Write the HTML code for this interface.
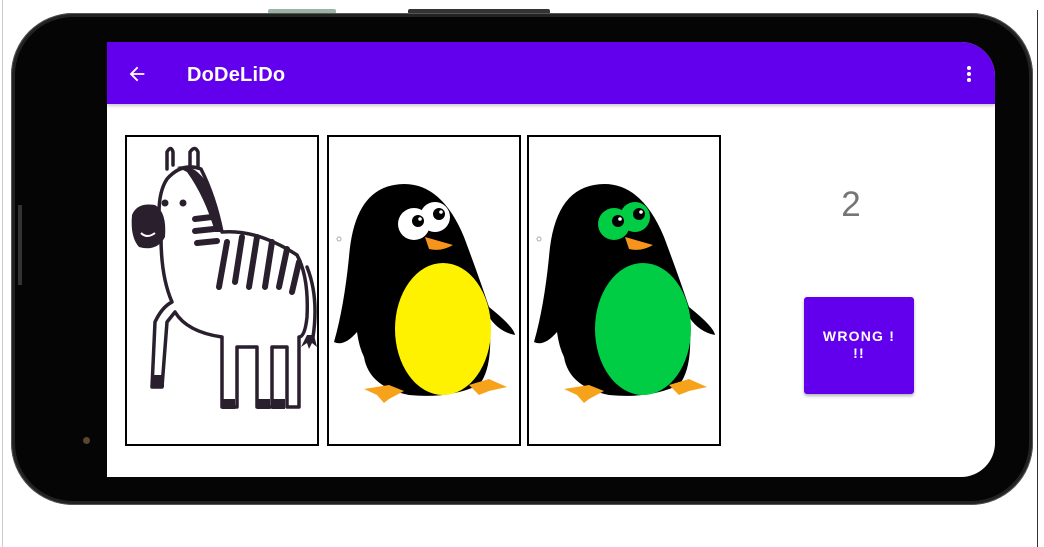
<!DOCTYPE html>
<html><head><meta charset="utf-8"><style>
html,body{margin:0;padding:0;width:1044px;height:547px;overflow:hidden;background:#fff;font-family:"Liberation Sans",sans-serif}
.abs{position:absolute}
.card{position:absolute;top:135px;width:190px;height:307px;border:2px solid #000;background:#fff}
.card svg{position:absolute;left:0;top:0}
</style></head><body>
<div class="abs" style="left:2px;top:0;width:1px;height:547px;background:#ccc"></div>
<div class="abs" style="left:1037px;top:10px;width:1px;height:537px;background:#333"></div>
<div class="abs" style="left:268px;top:9px;width:68px;height:5px;background:#9bb5a5;border-radius:2px"></div>
<div class="abs" style="left:408px;top:9px;width:142px;height:5px;background:#333;border-radius:2px"></div>
<div class="abs" style="left:11px;top:13px;width:1022px;height:492px;border-radius:62px;background:#222;box-shadow:0 0 0 1px #555 inset"></div>
<div class="abs" style="left:15px;top:17px;width:1014px;height:484px;border-radius:58px;background:#050505"></div>
<div class="abs" style="left:18px;top:205px;width:4px;height:80px;background:#333"></div>
<div class="abs" style="left:83px;top:437px;width:7px;height:7px;border-radius:50%;background:#5a4630"></div>
<div class="abs" style="left:107px;top:42px;width:888px;height:435px;background:#fff;border-radius:0 34px 34px 0;overflow:hidden">
  <div class="abs" style="left:0;top:0;width:888px;height:62px;background:#6200ee;box-shadow:0 2px 3px rgba(0,0,0,.2)"></div>
  <svg class="abs" style="left:19px;top:21px" width="22" height="22" viewBox="0 0 24 24"><path d="M20 11H7.83l5.59-5.59L12 4l-8 8 8 8 1.41-1.41L7.83 13H20v-2z" fill="#fff"/></svg>
  <div class="abs" style="left:80px;top:22px;color:#fff;font-size:20px;font-weight:bold;letter-spacing:.2px">DoDeLiDo</div>
  <div class="abs" style="left:860px;top:24px;width:4px;height:4px;border-radius:50%;background:#fff;box-shadow:0 6px 0 #fff,0 12px 0 #fff"></div>
  <div class="abs" style="left:699px;top:143px;width:90px;text-align:center;color:#757575;font-size:35px">2</div>
  <div class="abs" style="left:697px;top:255px;width:110px;height:97px;background:#6200ee;border-radius:3px;box-shadow:0 2px 3px rgba(0,0,0,.3);color:#fff;font-size:14px;font-weight:bold;letter-spacing:1.2px;text-align:center;line-height:17px;box-sizing:border-box;padding-top:31px">WRONG !<br>!!</div>
</div>
<div class="card" style="left:125px">
<svg width="190" height="307" viewBox="0 0 190 307">
 <g fill="none" stroke="#2a1f2d" stroke-width="3.5" stroke-linecap="round" stroke-linejoin="round">
  <path d="M40 32 V15 Q44 8 46 15 V28 M63 28 V15 Q68 8 71 15 V30"/>
  <path d="M34 100 Q28 60 40 42 Q55 25 74 32 Q88 60 95 95 Q130 92 170 118 Q182 140 180 180 Q178 200 172 200 V270 H160 V210 H145 V270 H130 V210 H110 V270 H95 V200 Q60 195 48 175 L40 185 L35 250 H25 L28 185 Q35 170 45 165 Q34 140 34 100"/>
  <path d="M180 130 Q192 160 186 200"/>
 </g>
 <path d="M50 30 Q70 25 85 55 L95 95 L88 95 Q78 60 60 35 Z" fill="#2a1f2d"/>
 <path d="M5 78 Q10 65 28 68 Q40 75 38 100 Q30 115 12 110 Q3 100 5 78Z" fill="#2a1f2d"/>
 <circle cx="38" cy="66" r="3.5" fill="#2a1f2d"/><circle cx="56" cy="66" r="3.5" fill="#2a1f2d"/>
 <path d="M14 96 Q20 102 28 96" stroke="#fff" stroke-width="2" fill="none"/>
 <g stroke="#2a1f2d" stroke-width="6" stroke-linecap="round">
  <path d="M68 82 L85 80 M68 94 L87 92 M70 106 L90 104"/>
  <path d="M100 105 L92 150 M115 100 L108 145 M130 100 L122 150 M145 105 L138 150 M160 112 L152 150 M172 125 L165 155"/>
 </g>
 <rect x="24" y="238" width="13" height="12" fill="#2a1f2d"/><rect x="95" y="262" width="13" height="10" fill="#2a1f2d"/><rect x="130" y="262" width="13" height="10" fill="#2a1f2d"/><rect x="145" y="262" width="13" height="10" fill="#2a1f2d"/>
 <path d="M180 198 l-6 12 l6 -4 l2 6 l3 -6 l5 4 l-3 -12z" fill="#2a1f2d"/>
</svg></div>
<div class="card" style="left:327px">
<svg width="190" height="307" viewBox="0 0 190 307">
 <circle cx="10" cy="102" r="2" fill="none" stroke="#aab"/>
 <path d="M20 120 Q25 55 65 48 Q110 40 135 100 Q150 140 160 170 Q185 190 186 198 Q170 195 160 180 Q165 230 150 248 Q120 262 80 258 Q40 250 35 220 Q30 210 28 195 Q15 210 5 205 Q15 170 20 120Z" fill="#000"/>
 <ellipse cx="114" cy="192" rx="48" ry="66" fill="#fff200"/>
 <circle cx="85" cy="87" r="16" fill="#fff"/><circle cx="106" cy="80" r="15" fill="#fff"/>
 <circle cx="89" cy="84" r="6" fill="#000"/><circle cx="110" cy="77" r="6" fill="#000"/>
 <circle cx="91" cy="82" r="1.8" fill="#fff"/><circle cx="112" cy="75" r="1.8" fill="#fff"/>
 <path d="M96 100 L124 108 Q112 115 100 112 Z" fill="#f7941d"/>
 <path d="M35 252 L60 248 L75 254 L60 262 L55 266 L48 258Z M140 248 L160 242 L178 250 L160 254 L150 258Z" fill="#f7a21b"/>
</svg></div>
<div class="card" style="left:527px">
<svg width="190" height="307" viewBox="0 0 190 307">
 <circle cx="10" cy="102" r="2" fill="none" stroke="#aab"/>
 <path d="M20 120 Q25 55 65 48 Q110 40 135 100 Q150 140 160 170 Q185 190 186 198 Q170 195 160 180 Q165 230 150 248 Q120 262 80 258 Q40 250 35 220 Q30 210 28 195 Q15 210 5 205 Q15 170 20 120Z" fill="#000"/>
 <ellipse cx="114" cy="192" rx="48" ry="66" fill="#00cc44"/>
 <circle cx="85" cy="87" r="16" fill="#00cc44"/><circle cx="106" cy="80" r="15" fill="#00cc44"/>
 <circle cx="89" cy="84" r="6" fill="#000"/><circle cx="110" cy="77" r="6" fill="#000"/>
 <circle cx="91" cy="82" r="1.8" fill="#fff"/><circle cx="112" cy="75" r="1.8" fill="#fff"/>
 <path d="M96 100 L124 108 Q112 115 100 112 Z" fill="#f7941d"/>
 <path d="M35 252 L60 248 L75 254 L60 262 L55 266 L48 258Z M140 248 L160 242 L178 250 L160 254 L150 258Z" fill="#f7a21b"/>
</svg></div>
</body></html>
